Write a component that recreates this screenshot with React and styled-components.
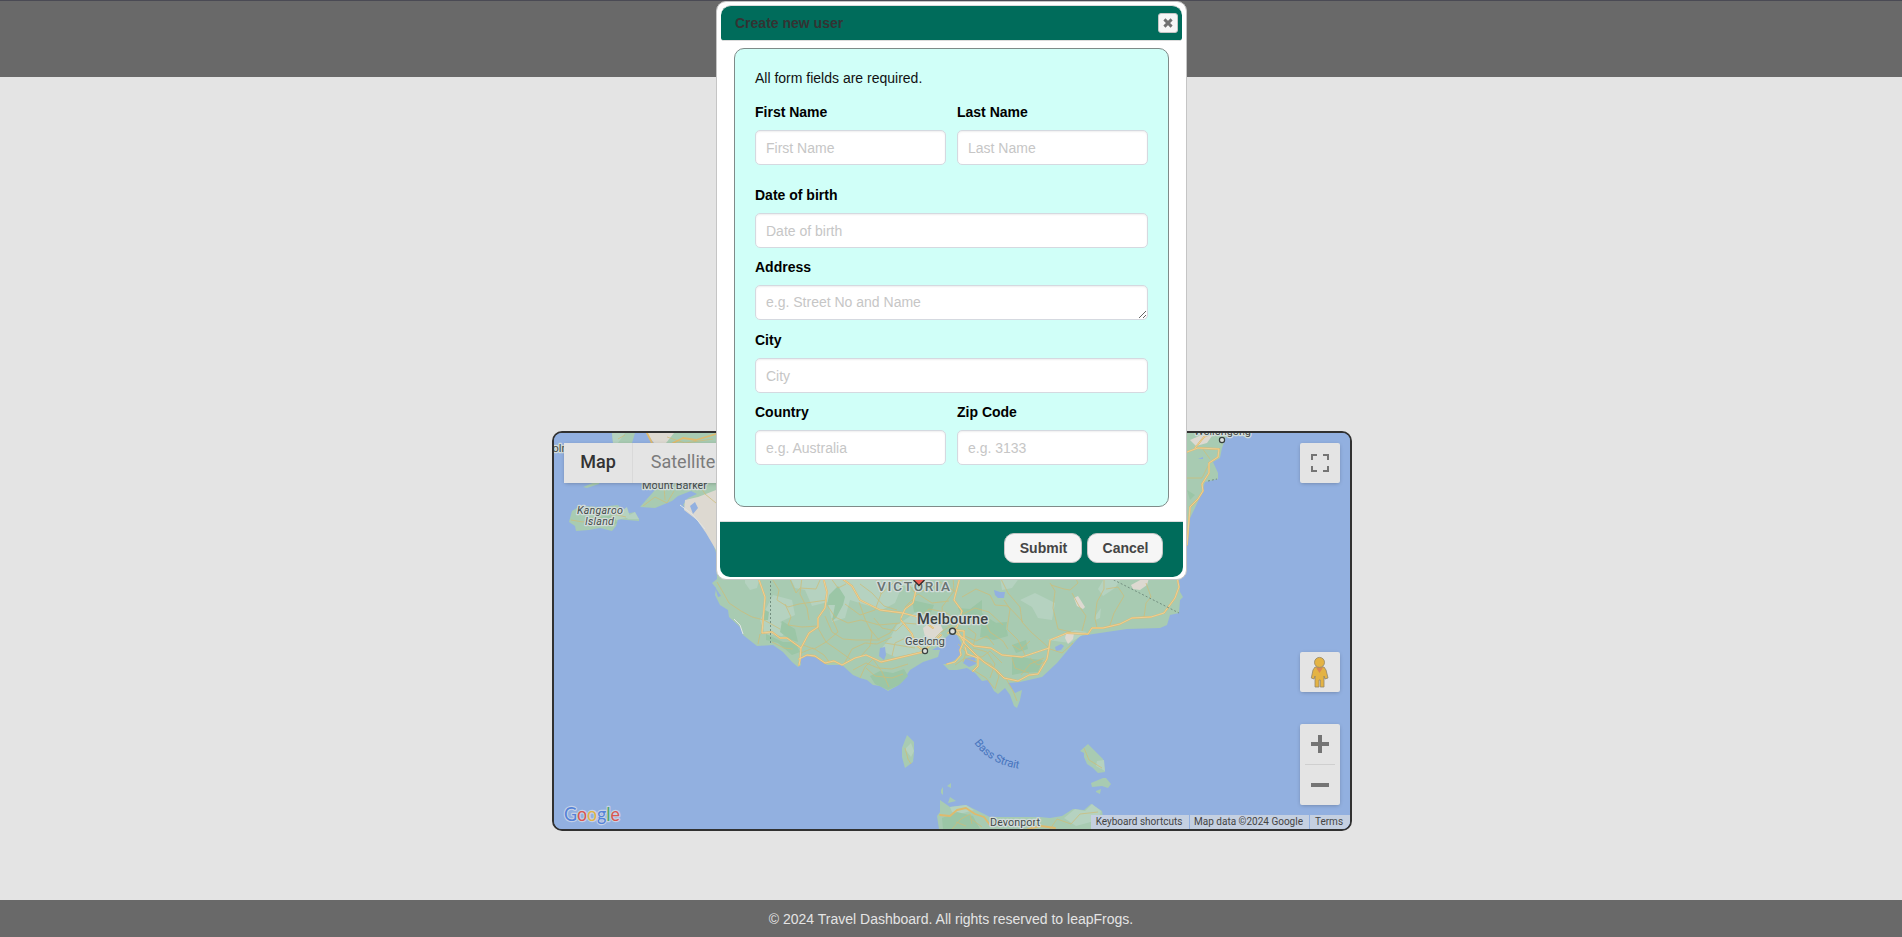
import React from "react";
import styled, { createGlobalStyle } from "styled-components";

const GlobalStyle = createGlobalStyle`
  * { box-sizing: border-box; }
  html, body { margin: 0; padding: 0; }
  body {
    background: #e4e4e4;
    font-family: Arial, "Liberation Sans", sans-serif;
    font-size: 14px;
    overflow: hidden;
  }
`;

const Page = styled.div`
  display: flex;
  flex-direction: column;
  height: 937px;
  width: 100%;
`;

const Header = styled.header`
  flex: 0 0 77px;
  background: #696969;
  border-top: 1px solid #4a4a54;
`;

const Main = styled.main`
  flex: 1;
  display: flex;
  flex-direction: column;
  align-items: center;
  justify-content: flex-end;
  padding: 0 0 69px 2px;
`;

const Footer = styled.footer`
  flex: 0 0 37px;
  display: flex;
  align-items: center;
  justify-content: center;
  background: #696969;
  color: #e4e4e4;
`;

/* ---------- Map ---------- */

const MapFrame = styled.section`
  position: relative;
  width: 800px;
  height: 400px;
  border: 2px solid #313131;
  border-radius: 10px;
  overflow: hidden;
  background: #92b0e0;
  font-family: Roboto, Arial, sans-serif;
`;

const MapCanvas = styled.svg`
  display: block;
  width: 796px;
  height: 396px;
`;

const MapTypeControl = styled.div`
  position: absolute;
  left: 10px;
  top: 10px;
  display: flex;
  height: 40px;
  border-radius: 2px;
  box-shadow: 0 1px 4px -1px rgba(0, 0, 0, 0.3);
`;

const MapTypeButton = styled.button`
  border: 0;
  border-left: ${(p) => (p.$active ? "0" : "1px solid #d9d9d9")};
  width: ${(p) => (p.$active ? 68 : 101)}px;
  padding: 0 0 3px;
  background: #e4e4e4;
  color: ${(p) => (p.$active ? "#333" : "#7b7b7b")};
  font: ${(p) => (p.$active ? 500 : 400)} 18px Roboto, Arial, sans-serif;
`;

const RightControls = styled.div`
  position: absolute;
  right: 10px;
  top: 10px;
  bottom: 24px;
  display: flex;
  flex-direction: column;
`;

const MapControl = styled.div`
  display: flex;
  flex-direction: column;
  align-items: center;
  width: 40px;
  height: ${(p) => p.$height || 40}px;
  margin-top: ${(p) => p.$gap || 0}px;
  border-radius: 2px;
  background: #e4e4e4;
  box-shadow: 0 1px 4px -1px rgba(0, 0, 0, 0.3);
`;

const ControlIcon = styled.svg`
  display: block;
  width: 40px;
  height: 40px;
`;

const ControlDivider = styled.div`
  width: 30px;
  height: 1px;
  background: #cfcfcf;
`;

const Attribution = styled.div`
  position: absolute;
  right: 0;
  bottom: 0;
  display: flex;
  gap: 1px;
  height: 14px;
  font-size: 10px;
  line-height: 14px;
  color: #444;
`;

const AttributionItem = styled.span`
  width: ${(p) => p.$width}px;
  padding-right: 2px;
  text-align: center;
  background: #c5d0e1;
  white-space: nowrap;
`;

/* ---------- Dialog ---------- */

const Dialog = styled.div`
  position: absolute;
  left: 716px;
  top: 1px;
  width: 471px;
  height: 579px;
  display: flex;
  flex-direction: column;
  padding: 3px 3px 2px;
  border: 1px solid #c5c5c5;
  border-radius: 10px;
  background: #fff;
`;

const TitleBar = styled.div`
  display: flex;
  flex-shrink: 0;
  align-items: center;
  justify-content: space-between;
  height: 36px;
  margin: 0 1px;
  padding: 0 4px 0 14px;
  background: #006c5b;
  border: solid #dcdcdc;
  border-width: 1px 0;
  border-radius: 10px 10px 3px 3px;
`;

const Title = styled.h1`
  margin: 0;
  padding-bottom: 1px;
  font-size: 14px;
  line-height: 20px;
  color: #333;
`;

const CloseButton = styled.button`
  display: flex;
  align-items: center;
  justify-content: center;
  width: 20px;
  height: 20px;
  padding: 0;
  border: 1px solid #c5c5c5;
  border-radius: 3px;
  background: #f6f6f6;
`;

const Form = styled.form`
  display: flex;
  flex-direction: column;
  flex-shrink: 0;
  width: 435px;
  height: 459px;
  margin: 7px 0 0 14px;
  padding: 19px 20px 0;
  border: 1px solid #7f8b89;
  border-radius: 10px;
  background: #d0fff8;
`;

const Hint = styled.p`
  margin: 0 0 14px;
  line-height: 20px;
  color: #111;
`;

const FieldRow = styled.div`
  display: grid;
  grid-template-columns: 1fr 1fr;
  gap: 11px;
`;

const Field = styled.label`
  display: flex;
  flex-direction: column;
  height: ${(p) => p.$height}px;
  color: #000;
  font-weight: bold;
  line-height: 20px;
`;

const inputStyle = `
  display: block;
  width: 100%;
  height: 35px;
  margin-top: 8px;
  border: 1px solid #d5d9e0;
  border-radius: 5px;
  background: #fff;
  box-shadow: inset 0 1px 2px rgba(0, 0, 0, 0.07);
  font: 14px Arial, "Liberation Sans", sans-serif;
  outline: none;
  &::placeholder { color: #c6c6c6; opacity: 1; }
`;

const Input = styled.input`
  ${inputStyle}
  padding: 0 10px;
`;

const TextArea = styled.textarea`
  ${inputStyle}
  padding: 8px 10px;
  overflow: hidden;
  resize: both;
`;

const ButtonPane = styled.div`
  display: flex;
  flex-shrink: 0;
  justify-content: flex-end;
  gap: 5px;
  height: 56px;
  margin-top: 14px;
  padding: 11px 20px 0;
  border-top: 1px solid #ddd;
  border-radius: 0 0 10px 10px;
  background: #006c5b;
`;

const DialogButton = styled.button`
  width: ${(p) => p.$width}px;
  height: 30px;
  padding: 0 0 0 1px;
  border: 1px solid #c5c5c5;
  border-radius: 10px;
  background: #f6f6f6;
  color: #454545;
  font: bold 14px Arial, "Liberation Sans", sans-serif;
`;

/* ---------- Map drawing ---------- */

const coast =
  "M716 553L712 540L705 530L695 517L683 505L688 498L697 494L691 491L678 496L672 501L655 508L640 507L646 500L655 490L668 478L660 440L640 425H1229L1225 440L1222 448L1220 458L1213 462L1218 473L1218 479L1205 482L1200 497L1195 508L1189 520L1187 545L1182 560L1179 580L1180 592L1183 597L1180 600L1179 613L1170 615L1167 625L1160 628L1127 629L1100 633L1080 636L1072 645L1057 663L1042 677L1020 682L1008 683L1015 693L1022 690L1020 700L1017 708L1014 706L1010 695L1005 688L998 694L994 691L988 680L982 681L975 673L967 668L957 670L949 670L943 664L947 664L955 660L960 655L961 643L957 635L950 634L943 640L939 646L932 650L940 650L938 657L923 662L910 670L902 682L897 686L888 691L880 686L873 685L867 680L860 678L853 675L842 665L827 665L817 658L807 655L799 657L801 665L798 667L792 662L783 652L773 645L757 646L743 635L740 627L729 617L728 610L720 605L715 595L716 588L712 583L717 579Z";

const paleAreas = [
  "M745 577L760 577L757 588L750 590L745 583Z",
  "M790 577H935L920 588L902 586L895 603L882 610L850 600L845 618L832 622L828 602L812 606L805 590L795 588Z",
  "M773 595L792 600L795 615L780 622L790 630L782 636L765 634L760 620Z",
  "M897 625L925 606L935 625L944 637L925 651L895 657L880 650L890 638Z",
  "M1020 600L1035 593L1055 603L1052 620L1038 618L1032 607Z",
  "M1096 615L1101 608L1100 618L1095 620Z",
  "M1105 577L1122 577L1115 588L1103 596L1098 589Z",
  "M1047 640L1075 630L1087 632L1070 643Z",
  "M1000 577L1020 577L1012 588L1002 590Z",
];
const darkAreas = [
  "M838 586L845 597L843 605L836 618L832 621L835 605L827 605L829 595Z",
  "M782 621L795 629L798 642L789 639L780 632Z",
  "M766 634L783 642L795 642L800 652L792 655L778 643L766 640Z",
  "M765 610L769 612L768 620L762 620Z",
  "M880 671L893 673L904 669L908 676L899 685L888 690L875 684L870 676Z",
  "M958 608L970 609L982 600L982 613L990 619L1007 630L1008 636L994 640L980 637L982 621L965 624Z",
  "M1012 655L1032 659L1043 660L1038 672L1022 673L1012 675Z",
  "M912 600L934 605L930 615L914 612Z",
  "M993 623L1007 622L1005 635L995 637Z",
  "M1012 645L1026 640L1028 649L1016 653Z",
  "M1187 490L1195 495L1190 500Z",
];
const towns = [
  "M1074 598L1078 596L1085 607L1083 609L1077 606Z",
  "M1131 585L1142 579L1149 578L1147 585L1140 590L1133 589Z",
  "M1066 634L1074 633L1073 639L1068 644L1065 638Z",
  "M923 628L937 617L943 630L936 638L926 641Z",
  "M1190 440L1206 433H1214L1207 443L1196 446Z",
  "M685 500L698 497L716 490V550L706 533L697 520L684 510Z",
];
const mainRoads = [
  "M758 577L765 597L762 633L772 632L780 638L787 638L801 648L800 660L799 665",
  "M801 648L809 633L818 627L818 618L825 608L827 592L823 577",
  "M799 659L807 655L815 656L825 663L834 661L842 665L855 658L866 655L877 660L881 662L898 658L923 652L941 635",
  "M840 577L852 586L860 600L880 610L903 613L918 617L933 628",
  "M901 620L912 634L915 644L924 651",
  "M901 618L905 609L913 603L916 590L916 578",
  "M948 633L957 627L962 611L954 600L960 577",
  "M954 632L965 639L974 646L991 648L1002 655L1022 657L1049 648L1050 640L1067 633L1088 634L1092 628L1103 628L1120 624L1132 618L1151 617L1164 613L1175 598L1179 587L1177 577",
  "M1049 648L1047 659L1038 674L1029 675L1018 681L1004 678L996 670L984 662L976 655L965 644L957 630",
  "M954 630L964 631V641L960 650L961 655L955 662L947 664",
  "M965 647L967 654L978 658L978 666L973 671",
  "M1175 551L1187 545L1189 520L1190 507L1198 499L1203 491L1202 484L1209 473L1209 463L1218 457L1219 449L1198 448L1187 452",
  "M1195 448L1204 437L1212 433",
];
const minorRoads = [
  "M717 582L724 594L729 603L741 611L752 617L764 620L780 629",
  "M771 577L779 590L777 600L788 607L799 604L813 602L827 600",
  "M785 604L791 617L788 625L802 627L818 626",
  "M789 577L796 593L800 588L816 589L820 580",
  "M802 577L800 594L807 608L809 620",
  "M827 605L835 617L848 623L861 620L879 625L900 623",
  "M830 577L838 588L846 584",
  "M825 616L832 632L843 639L856 640L880 640",
  "M818 628L826 642L839 651L850 659",
  "M803 645L814 649L826 642L838 632L832 618",
  "M801 653L813 648L824 655L830 663",
  "M844 664L852 649L865 643L877 644L892 637",
  "M861 656L870 646L872 633L865 619L859 602",
  "M853 670L866 663L878 668L892 669L908 664",
  "M860 678L865 667L873 659L882 672L889 687",
  "M866 668L875 676L892 678L903 674",
  "M772 642L784 648L793 649",
  "M760 634L758 644",
  "M845 604L860 615L875 610L881 594L875 577",
  "M881 594L893 583L905 579L914 592",
  "M860 584L872 593L884 606L897 610",
  "M874 618L882 628L896 631L904 623L917 624",
  "M870 629L878 639L890 633L897 623",
  "M885 643L897 645L915 648",
  "M892 656L895 643L910 636L925 642",
  "M905 607L918 594L932 603L949 601",
  "M914 592L929 590L940 582L956 592",
  "M920 616L929 609L945 612L960 622",
  "M934 625L944 620L959 624",
  "M932 641L941 632L949 627L957 622",
  "M953 577L954 591L942 607L943 620L953 631",
  "M962 597L976 589L990 595L995 605L1008 606L1023 622",
  "M963 614L975 608L989 612L1003 625",
  "M957 618L971 623L984 620L990 632L1003 641L1008 649",
  "M963 635L976 641L987 636L994 645",
  "M968 628L976 634L973 647",
  "M958 644L966 652L963 662",
  "M973 648L987 652L995 664L990 678",
  "M965 655L982 657L990 651L1002 663",
  "M978 659L991 664L999 676L995 689",
  "M1000 577L1008 593L1020 607L1022 622L1031 632L1048 647",
  "M1004 600L1010 609L1007 629L1018 640L1025 655",
  "M1050 583L1055 591L1053 608L1058 629L1071 632",
  "M1051 585L1064 589L1070 590L1078 583L1075 577",
  "M1072 593L1079 606L1086 616L1082 631",
  "M1104 577L1104 589L1097 602L1095 618L1097 628",
  "M1106 589L1118 587L1124 596L1114 613L1110 625",
  "M1146 583L1151 597L1146 603L1144 617",
  "M1012 658L1015 668L1029 673",
  "M1021 675L1030 664L1044 658",
  "M1030 658L1038 665L1046 661",
  "M1012 645L1020 650L1030 641",
  "M1050 649L1062 653L1073 643",
  "M1005 677L1013 691L1017 701",
  "M975 671L986 678L994 688",
  "M955 665L965 658L979 663",
  "M643 506L655 497L667 503L674 491",
  "M664 486L665 500",
  "M700 485L705 494L716 503",
  "M1202 448L1210 459M1187 478L1202 478L1209 464",
];

const halo = {
  stroke: "#d2dcda",
  strokeWidth: 2.6,
  strokeLinejoin: "round",
  paintOrder: "stroke",
};

function RegionMap() {
  return (
    <MapCanvas viewBox="554 433 796 396">
      <defs>
        <path id="strait" d="M974 743Q990 765 1021 769" />
      </defs>
      <rect x="554" y="433" width="796" height="396" fill="#92b0e0" />
      <g fill="#a8cbb2">
        <path d={coast} />
        <path d="M612 433H635L632 443H613Z" />
        <path d="M583 487L600 480L599 484L587 488Z" />
        <path d="M569 522L572 511L580 506L600 507L618 505L625 514L635 512L636 517L639 519L639 521L627 520L618 519L616 526L612 531L600 528L589 530L576 531L575 526Z" />
        <path d="M907 735L914 742V753L913 762L905 768L902 757L902 748Z" />
        <path d="M1080 751L1088 744L1094 750L1103 759L1105 772L1098 773L1093 768L1087 764L1084 757L1084 753Z" />
        <path d="M1091 783L1103 778L1106 778L1111 784L1108 788L1102 786L1092 787Z" />
        <path d="M1096 791L1101 789L1100 794L1096 792Z" />
        <path d="M941 790L943 787L943 795L941 793ZM947 786L951 783V788ZM950 797L956 801L948 803Z" />
        <path d="M940 800L950 807L966 805L980 812L990 817H1040L1050 818L1062 816L1073 809L1084 810L1091 804L1102 811L1105 829H939L937 816L940 812Z" />
      </g>
      <g fill="#b5d2c0">
        {paleAreas.map((d) => <path key={d} d={d} />)}
        <path d="M608 521L627 507L630 517L617 520ZM626 517L635 512L639 519L628 519Z" />
        <path d="M905 749L911 743L914 751L911 757ZM1097 761L1104 760L1105 771L1096 766Z" />
        <path d="M1064 818L1075 809L1085 811L1092 804L1101 811L1098 820L1076 826Z" />
        <path d="M950 807L966 805L974 810L960 814L952 812Z" />
        <path d="M612 433H625L618 443H613Z" />
      </g>
      <g fill="#9bc6a6">
        {darkAreas.map((d) => <path key={d} d={d} />)}
        <path d="M942 818L957 812L973 816L980 829H943ZM600 517L614 515L617 523L610 527Z" />
      </g>
      <g fill="#ddd9d1">
        {towns.map((d) => <path key={d} d={d} />)}
        <path d="M646 433H674L666 443H654Z" />
      </g>
      <g fill="#92b0e0">
        <path d="M880 648L885 647L886 655L884 660L879 656ZM994 590L1000 592L1005 592L1004 598L998 598L995 595Z" />
        <path d="M1055 647L1061 644L1064 646L1061 650L1056 651ZM966 658L975 657L976 664L969 667L963 663Z" />
        <path d="M690 506L695 502L698 508L693 514ZM1198 459L1203 457V459ZM715 587L721 596L718 597Z" />
      </g>
      <path d="M734 619L740 625L743 634M680 505L692 514L705 529" fill="none" stroke="#e0e5e5" />
      <g fill="none" stroke="#cfbd78" strokeWidth=".85" strokeLinejoin="round" opacity=".88">
        {minorRoads.map((d) => <path key={d} d={d} />)}
        <path d="M571 520L583 522L598 516L608 523L613 514L626 517M905 748L908 759L911 764M1084 748L1089 760L1102 768" />
        <path d="M952 829L961 819L970 814L972 824M956 822L966 826M1050 829L1057 819L1071 824L1080 814L1098 812M970 818L982 827" />
        <path d="M618 439L625 435M667 437L685 443L713 439" />
      </g>
      <g fill="none" strokeLinejoin="round" strokeLinecap="round">
        <g stroke="#dfba6e" strokeWidth="1.8">
          {mainRoads.map((d) => <path key={d} d={d} />)}
          <path d="M940 815L950 816L957 810L966 808L975 814L984 817L990 825M1028 829L1041 826L1055 828M647 433L652 443M673 443L683 438L696 440L716 434" />
        </g>
        <g stroke="#eed19a" strokeWidth=".9">
          {mainRoads.map((d) => <path key={d} d={d} />)}
        </g>
      </g>
      <path d="M770.5 577V645" fill="none" stroke="#738f80" strokeDasharray="2 2" />
      <path d="M1110 578L1179 613M1208 481L1217 479" fill="none" stroke="#738f80" strokeDasharray="2 2" />
      <g fontFamily="Roboto, Arial, sans-serif" fill="#444b4a">
        <text x="877" y="591" textLength="73" fontSize="13.6" fontWeight="500" fill="#687371" {...halo}>VICTORIA</text>
        <path d="M913 580H925L919 586Z" fill="#e95d54" />
        <path d="M913.5 580L919 585.5L924.5 580" fill="none" stroke="#302d2c" strokeWidth="1.3" />
        <text x="917" y="624" textLength="71" fontSize="14.6" fontWeight="500" fill="#3d4443" {...halo}>Melbourne</text>
        <text x="905" y="645" textLength="40" fontSize="11.4" {...halo}>Geelong</text>
        <text x="990" y="825.5" textLength="50" fontSize="11" {...halo}>Devonport</text>
        <text x="642" y="488.5" textLength="65" fontSize="11" {...halo}>Mount Barker</text>
        <text x="577" y="513.5" textLength="46" fontSize="10.8" fontStyle="italic" {...halo}>Kangaroo</text>
        <text x="585" y="524.5" textLength="29" fontSize="10.8" fontStyle="italic" {...halo}>Island</text>
        <text x="1194" y="435" textLength="57" fontSize="11" {...halo}>Wollongong</text>
        <text x="532" y="452" fontSize="11" {...halo}>Lincoln</text>
        <text fontSize="11.2" fill="#4774bd">
          <textPath href="#strait" textLength="53">Bass Strait</textPath>
        </text>
      </g>
      <g fill="#dce0dd" stroke="#39403f">
        <circle cx="952.5" cy="631.3" r="3" strokeWidth="1.4" />
        <circle cx="925" cy="651" r="2.6" strokeWidth="1.2" />
        <circle cx="1222" cy="440" r="2.6" strokeWidth="1.2" />
      </g>
      <text x="564" y="821" fontFamily="Lato, Arial, sans-serif" fontSize="19" fontWeight="400" textLength="56" lengthAdjust="spacingAndGlyphs" stroke="#c5d1e6" strokeWidth="2.4" paintOrder="stroke" strokeLinejoin="round">
        <tspan fill="#5482d8">G</tspan><tspan fill="#d95750">o</tspan><tspan fill="#e1b347">o</tspan><tspan fill="#5482d8">g</tspan><tspan fill="#4da568">l</tspan><tspan fill="#d95750">e</tspan>
      </text>
    </MapCanvas>
  );
}

function FullscreenIcon() {
  return (
    <ControlIcon viewBox="0 0 40 40">
      <path d="M12 17V12H17M23 12H28V17M28 23V28H23M17 28H12V23" fill="none" stroke="#747474" strokeWidth="2" />
    </ControlIcon>
  );
}

function PegmanIcon() {
  return (
    <ControlIcon viewBox="0 0 40 40">
      <path d="M15 15H24L26 18L28 26L25 27L24 24V35H20.3V28H19V35H15V24L14 27L11.3 26L13 18Z" fill="#e4b343" stroke="#92856a" strokeWidth=".8" />
      <path d="M16 15.5H23L19.5 21Z" fill="#d98555" />
      <circle cx="19.5" cy="10.4" r="5" fill="#e4b343" stroke="#92856a" strokeWidth=".8" />
    </ControlIcon>
  );
}

function PlusIcon() {
  return (
    <ControlIcon viewBox="0 0 40 40">
      <path d="M18 11H22V18H29V22H22V29H18V22H11V18H18Z" fill="#747474" />
    </ControlIcon>
  );
}

function MinusIcon() {
  return (
    <ControlIcon viewBox="0 0 40 40">
      <path d="M11 18H29V22H11Z" fill="#747474" />
    </ControlIcon>
  );
}

function CrossIcon() {
  return (
    <svg width="10" height="10" viewBox="0 0 10 10">
      <path d="M1.4 1.4L8.6 8.6M8.6 1.4L1.4 8.6" stroke="#707070" strokeWidth="2.9" />
    </svg>
  );
}

export default function App() {
  return (
    <>
      <GlobalStyle />
      <Page>
        <Header />
        <Main>
          <MapFrame>
            <RegionMap />
            <MapTypeControl>
              <MapTypeButton $active>Map</MapTypeButton>
              <MapTypeButton>Satellite</MapTypeButton>
            </MapTypeControl>
            <RightControls>
              <MapControl><FullscreenIcon /></MapControl>
              <MapControl $gap={169}><PegmanIcon /></MapControl>
              <MapControl $gap={32} $height={81}>
                <PlusIcon />
                <ControlDivider />
                <MinusIcon />
              </MapControl>
            </RightControls>
            <Attribution>
              <AttributionItem $width={98}>Keyboard shortcuts</AttributionItem>
              <AttributionItem $width={119}>Map data ©2024 Google</AttributionItem>
              <AttributionItem $width={40}>Terms</AttributionItem>
            </Attribution>
          </MapFrame>
        </Main>
        <Footer>© 2024 Travel Dashboard. All rights reserved to leapFrogs.</Footer>
      </Page>
      <Dialog role="dialog">
        <TitleBar>
          <Title>Create new user</Title>
          <CloseButton type="button" aria-label="Close"><CrossIcon /></CloseButton>
        </TitleBar>
        <Form>
          <Hint>All form fields are required.</Hint>
          <FieldRow>
            <Field $height={83}>First Name<Input placeholder="First Name" /></Field>
            <Field $height={83}>Last Name<Input placeholder="Last Name" /></Field>
          </FieldRow>
          <Field $height={72}>Date of birth<Input placeholder="Date of birth" /></Field>
          <Field $height={73}>Address<TextArea rows={1} placeholder="e.g. Street No and Name" /></Field>
          <Field $height={72}>City<Input placeholder="City" /></Field>
          <FieldRow>
            <Field $height={63}>Country<Input placeholder="e.g. Australia" /></Field>
            <Field $height={63}>Zip Code<Input placeholder="e.g. 3133" /></Field>
          </FieldRow>
        </Form>
        <ButtonPane>
          <DialogButton $width={78}>Submit</DialogButton>
          <DialogButton $width={76}>Cancel</DialogButton>
        </ButtonPane>
      </Dialog>
    </>
  );
}
